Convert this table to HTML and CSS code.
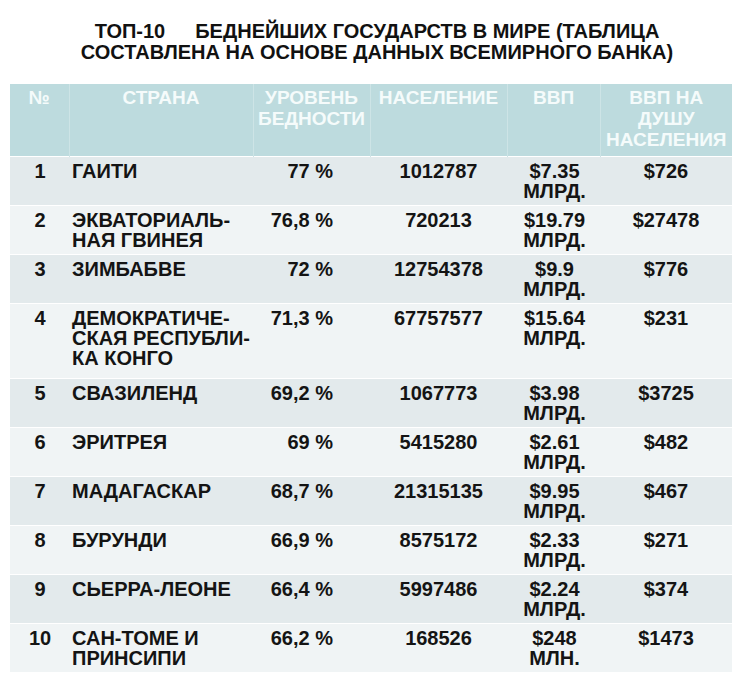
FILE: index.html
```html
<!DOCTYPE html>
<html lang="ru">
<head>
<meta charset="utf-8">
<title>ТОП-10 беднейших государств в мире</title>
<link rel="stylesheet" href="styles.css">
</head>
<body>
<div class="page">
  <h1 class="title"><span class="gap">ТОП-10</span>БЕДНЕЙШИХ ГОСУДАРСТВ В МИРЕ (ТАБЛИЦА<br>СОСТАВЛЕНА НА ОСНОВЕ ДАННЫХ ВСЕМИРНОГО БАНКА)</h1>
  <table class="data">
    <colgroup>
      <col class="c-num"><col class="c-country"><col class="c-pov"><col class="c-pop"><col class="c-gdp"><col class="c-cap">
    </colgroup>
    <thead>
      <tr class="head">
        <th class="num">№</th>
        <th>СТРАНА</th>
        <th>УРОВЕНЬ<br>БЕДНОСТИ</th>
        <th>НАСЕЛЕНИЕ</th>
        <th>ВВП</th>
        <th>ВВП НА<br>ДУШУ<br>НАСЕЛЕНИЯ</th>
      </tr>
    </thead>
    <tbody>
      <tr class="odd"><td class="num">1</td><td class="country">ГАИТИ</td><td class="pov">77 %</td><td class="pop">1012787</td><td class="gdp">$7.35<br>МЛРД.</td><td class="cap">$726</td></tr>
      <tr class="even"><td class="num">2</td><td class="country">ЭКВАТОРИАЛЬ-<br>НАЯ ГВИНЕЯ</td><td class="pov">76,8 %</td><td class="pop">720213</td><td class="gdp">$19.79<br>МЛРД.</td><td class="cap">$27478</td></tr>
      <tr class="odd"><td class="num">3</td><td class="country">ЗИМБАБВЕ</td><td class="pov">72 %</td><td class="pop">12754378</td><td class="gdp">$9.9<br>МЛРД.</td><td class="cap">$776</td></tr>
      <tr class="even tall"><td class="num">4</td><td class="country">ДЕМОКРАТИЧЕ-<br>СКАЯ РЕСПУБЛИ-<br>КА КОНГО</td><td class="pov">71,3 %</td><td class="pop">67757577</td><td class="gdp">$15.64<br>МЛРД.</td><td class="cap">$231</td></tr>
      <tr class="odd"><td class="num">5</td><td class="country">СВАЗИЛЕНД</td><td class="pov">69,2 %</td><td class="pop">1067773</td><td class="gdp">$3.98<br>МЛРД.</td><td class="cap">$3725</td></tr>
      <tr class="even"><td class="num">6</td><td class="country">ЭРИТРЕЯ</td><td class="pov">69 %</td><td class="pop">5415280</td><td class="gdp">$2.61<br>МЛРД.</td><td class="cap">$482</td></tr>
      <tr class="odd"><td class="num">7</td><td class="country">МАДАГАСКАР</td><td class="pov">68,7 %</td><td class="pop">21315135</td><td class="gdp">$9.95<br>МЛРД.</td><td class="cap">$467</td></tr>
      <tr class="even"><td class="num">8</td><td class="country">БУРУНДИ</td><td class="pov">66,9 %</td><td class="pop">8575172</td><td class="gdp">$2.33<br>МЛРД.</td><td class="cap">$271</td></tr>
      <tr class="odd"><td class="num">9</td><td class="country">СЬЕРРА-ЛЕОНЕ</td><td class="pov">66,4 %</td><td class="pop">5997486</td><td class="gdp">$2.24<br>МЛРД.</td><td class="cap">$374</td></tr>
      <tr class="even"><td class="num">10</td><td class="country">САН-ТОМЕ И<br>ПРИНСИПИ</td><td class="pov">66,2 %</td><td class="pop">168526</td><td class="gdp">$248<br>МЛН.</td><td class="cap">$1473</td></tr>
    </tbody>
  </table>
</div>
</body>
</html>
```

FILE: styles.css
```css
html, body {
  margin: 0;
  padding: 0;
  background: #ffffff;
}

.page {
  width: 750px;
  height: 678px;
  overflow: hidden;
  font-family: "Liberation Sans", Arial, sans-serif;
  color: #141414;
}

.title {
  margin: 21px 0 0 4px;
  font-size: 20px;
  line-height: 21px;
  font-weight: bold;
  text-align: center;
  color: #111111;
}

.title .gap {
  margin-right: 30px;
}

.data {
  margin: 21px 0 0 10px;
  width: 722px;
  table-layout: fixed;
  border-collapse: collapse;
  font-size: 20px;
  font-weight: bold;
}

.c-num { width: 59px; }
.c-country { width: 184px; }
.c-pov { width: 117px; }
.c-pop { width: 137px; }
.c-gdp { width: 93px; }
.c-cap { width: 132px; }

.head {
  height: 72px;
  background: #bddbde;
}

.head th {
  padding: 3px 0 0 0;
  vertical-align: top;
  text-align: center;
  font-size: 19px;
  line-height: 21px;
  font-weight: bold;
  color: #f5fbfb;
  border-left: 1px solid #cde4e6;
  white-space: nowrap;
}

.head th:first-child {
  border-left: none;
}

tbody tr {
  height: 49px;
  border-top: 1px solid #ffffff;
}

tbody tr.tall {
  height: 75px;
}

tbody tr.odd {
  background: #e3eaec;
}

tbody tr.even {
  background: #f0f4f5;
}

tbody td {
  padding: 4px 0 0 0;
  vertical-align: top;
  line-height: 20px;
  white-space: nowrap;
}

td.num {
  text-align: center;
  padding-left: 1px;
}

td.country {
  text-align: left;
  padding-left: 3px;
}

td.pov {
  text-align: right;
  padding-right: 37px;
}

td.pop {
  text-align: center;
}

td.gdp {
  text-align: center;
  padding-left: 2px;
}

td.cap {
  text-align: center;
}
```
